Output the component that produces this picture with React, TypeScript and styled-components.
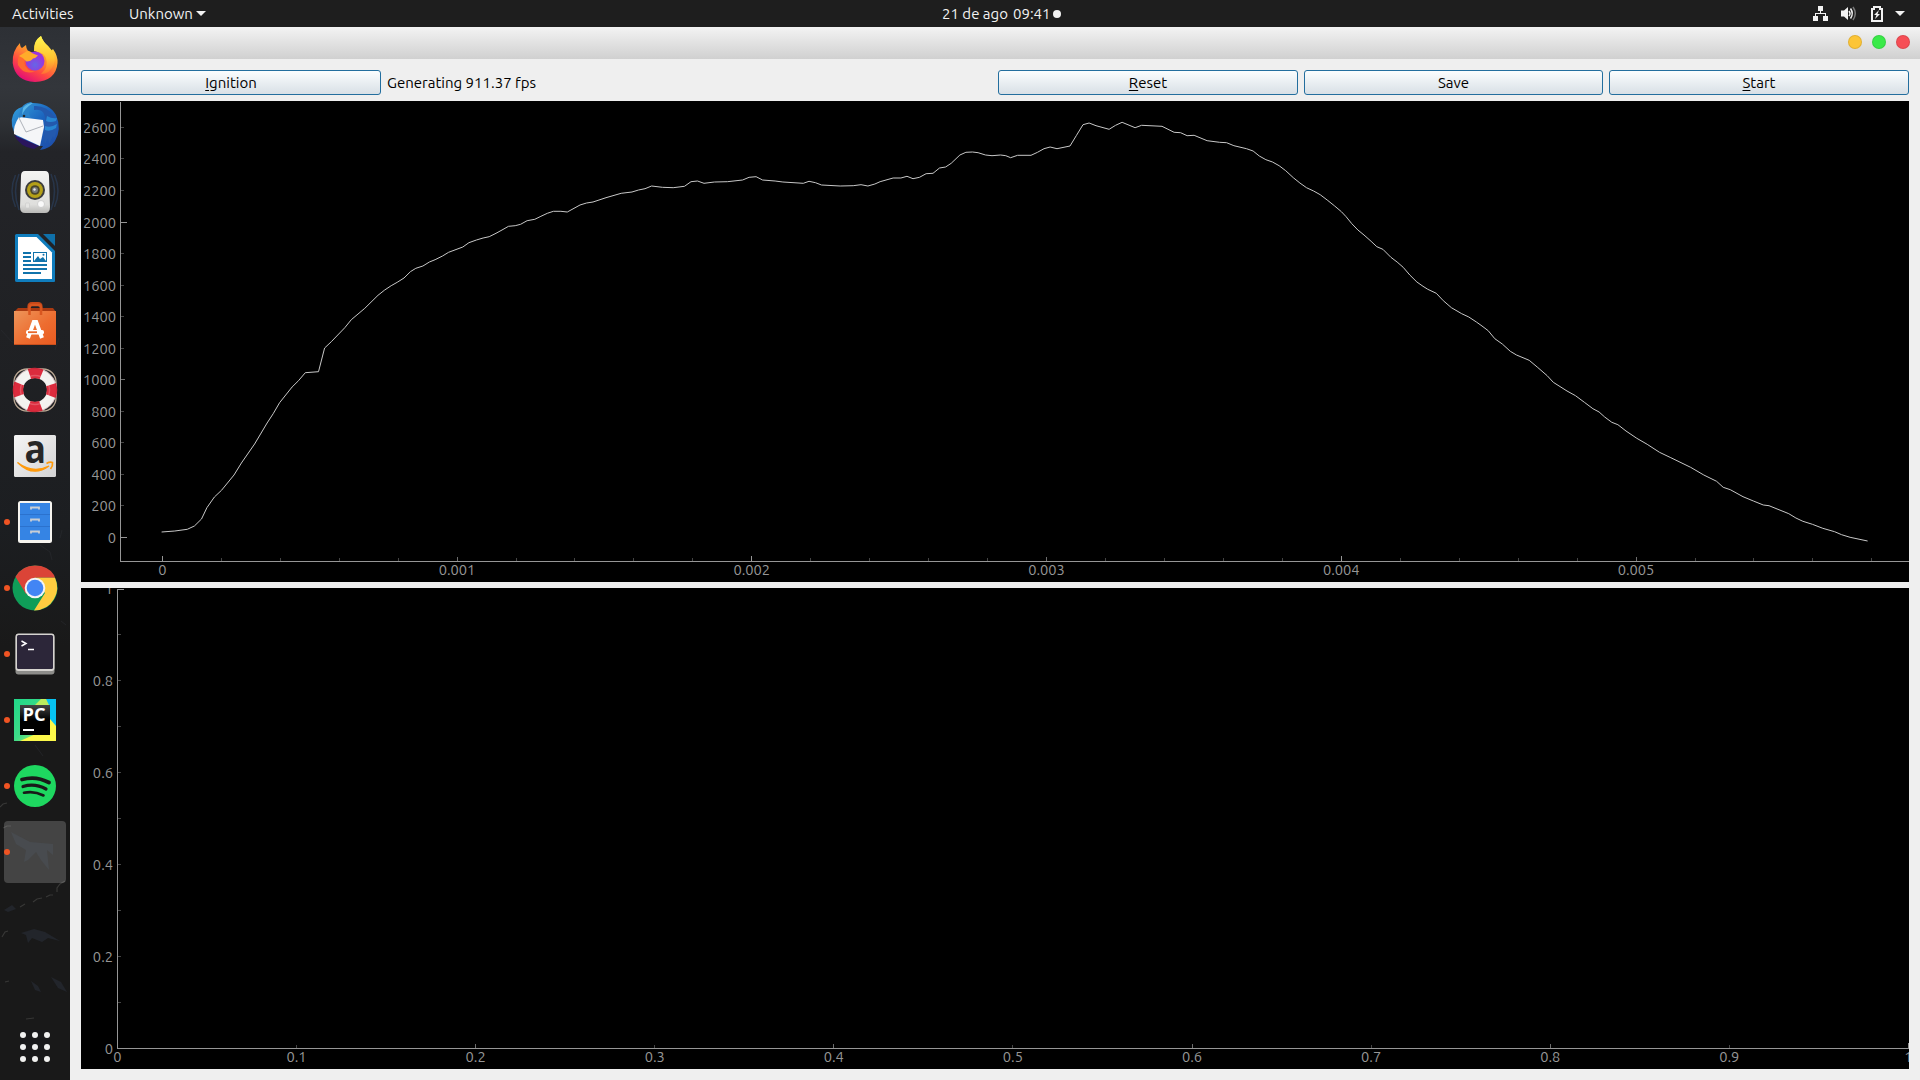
import React from "react";
import styled, { createGlobalStyle } from "styled-components";

const GlobalStyle = createGlobalStyle`
  html, body { margin: 0; padding: 0; }
  body { background: #1b1b1c; overflow: hidden; }
  * { box-sizing: border-box; }
`;

const fontStack = `Ubuntu, "Noto Sans", "Open Sans", sans-serif`;

const Desktop = styled.div`
  display: flex;
  flex-direction: column;
  width: 1920px;
  height: 1080px;
  font-family: ${fontStack};
  font-size: 15px;
  overflow: hidden;
`;

const TopBar = styled.header`
  display: grid;
  grid-template-columns: 942px auto 1fr;
  align-items: center;
  height: 27px;
  flex: none;
  background: #1e1e1e;
  color: #f2f2f2;
  line-height: 26px;
`;

const TopLeft = styled.div`
  display: flex;
  align-items: center;
  padding-left: 12px;
`;

const BarLabel = styled.span<{ $width: number }>`
  width: ${(p) => p.$width}px;
  white-space: nowrap;
`;

const Caret = styled.span`
  width: 0;
  height: 0;
  border: 5px solid transparent;
  border-top-color: #f2f2f2;
  border-bottom: 0;
`;

const Clock = styled.div`
  display: flex;
  align-items: center;
`;

const NoticeDot = styled.span`
  width: 8px;
  height: 8px;
  border-radius: 50%;
  background: #f2f2f2;
`;

const Tray = styled.div`
  display: flex;
  justify-content: flex-end;
  align-items: center;
  padding-right: 15px;
`;

const TrayIcon = styled.svg<{ $gap: number }>`
  display: block;
  margin-right: ${(p) => p.$gap}px;
`;

const Workspace = styled.div`
  display: flex;
  flex: 1;
  min-height: 0;
`;

const Dock = styled.nav`
  position: relative;
  display: flex;
  flex-direction: column;
  width: 70px;
  flex: none;
  background: linear-gradient(#2d3035 0, #33363b 60px, #2e3135 95px, #232428 125px, #202124 300px, #1c1e21 500px, #191919 620px, #191919 100%);
`;

const Wallpaper = styled.svg`
  position: absolute;
  inset: 0;
`;

const DockCell = styled.div<{ $bottom?: boolean }>`
  position: relative;
  width: 70px;
  height: 66px;
  flex: none;
  margin-top: ${(p) => (p.$bottom ? "auto" : "0")};
`;

const DockTile = styled.div`
  position: absolute;
  left: 4px;
  top: 2px;
  width: 62px;
  height: 62px;
  border-radius: 4px;
  background: rgba(255, 255, 255, 0.19);
`;

const RunningDot = styled.span`
  position: absolute;
  left: 4px;
  top: 30px;
  width: 6px;
  height: 6px;
  border-radius: 50%;
  background: #f05423;
`;

const DockSvg = styled.svg`
  position: relative;
  display: block;
`;

const Window = styled.main`
  display: flex;
  flex-direction: column;
  flex: 1;
  background: #efefef;
`;

const TitleBar = styled.div`
  display: flex;
  justify-content: flex-end;
  align-items: center;
  gap: 10px;
  height: 32px;
  padding: 0 10px 2px 0;
  background: linear-gradient(#f3f3f3, #d0d0d0);
`;

const WindowControl = styled.button<{ $color: string }>`
  width: 14px;
  height: 14px;
  padding: 0;
  border: 1px solid rgba(0, 0, 0, 0.1);
  border-radius: 50%;
  background: ${(p) => p.$color};
`;

const Body = styled.div`
  display: flex;
  flex-direction: column;
  gap: 6px;
  padding: 11px 11px 11px 11px;
`;

const Toolbar = styled.div`
  display: flex;
  gap: 6px;
  height: 25px;
`;

const PushButton = styled.button<{ $width?: number }>`
  width: ${(p) => p.$width ?? 300}px;
  flex: none;
  padding: 0;
  border: 1px solid #236e9e;
  border-radius: 3px;
  background: linear-gradient(#fbfdfe, #d8e0e6);
  color: #000;
  font-family: ${fontStack};
  font-size: 15px;
  line-height: 23px;
`;

const Mnemonic = styled.span`
  text-decoration: underline;
  text-underline-offset: 2px;
  text-decoration-thickness: 1px;
`;

const Status = styled.span`
  flex: 1;
  line-height: 25px;
  color: #000;
  white-space: nowrap;
`;

const Plot = styled.svg`
  display: block;
  width: 1828px;
  height: 481px;
  background: #000;
  font-family: ${fontStack};
  font-size: 14.67px;
  fill: #969696;
`;

const shades = { major: "#969696", medium: "#6c6c6c", minor: "#444444" };
type Level = keyof typeof shades;

interface Tick {
  at: number;
  label?: string;
  level: Level;
}

interface AxesProps {
  x0: number;
  y0: number;
  top: number;
  xTicks: Tick[];
  yTicks: Tick[];
}

const tickLength: Record<Level, number> = { major: 5, medium: 4, minor: 3 };

function Axes({ x0, y0, top, xTicks, yTicks }: AxesProps) {
  return (
    <g shapeRendering="crispEdges">
      {xTicks.map((t) => (
        <rect key={t.at} x={Math.floor(t.at)} y={y0 - tickLength[t.level]} width={1} height={tickLength[t.level]} fill={shades[t.level]} />
      ))}
      {yTicks.map((t) => (
        <rect key={t.at} x={x0 + 1} y={Math.max(top, Math.floor(t.at))} width={tickLength[t.level] + (t.level === "major" ? 1 : 0)} height={1} fill={shades[t.level]} />
      ))}
      <rect x={x0} y={top} width={1} height={y0 - top + 1} />
      <rect x={x0} y={y0} width={1909 - x0} height={1} />
      {xTicks.map((t) => t.label && (
        <text key={t.label} x={t.at} y={y0 + 14} textAnchor="middle">{t.label}</text>
      ))}
      {yTicks.map((t) => t.label && (
        <text key={t.label} x={x0 - 4} y={Math.floor(t.at) + 6} textAnchor="end">{t.label}</text>
      ))}
    </g>
  );
}

interface Segment {
  left: number;
  top: number;
  perX: number;
  points: string;
}

const thrust: Segment[] = [
  {
    left: 70, top: 90, perX: 2.958,
    points: "271,1326 310,1323 347,1318 368,1308 389,1287 405,1253 427,1221 448,1201 485,1155 507,1119 546,1062 583,999 601,971 620,938 657,891 676,872 696,848 735,845 753,774 773,755 813,713 832,689 872,655 911,616 931,600 950,587 968,577 988,564 1007,545 1023,535 1044,528 1063,516 1080,509 1102,498 1120,487 1162,471 1180,458 1202,450 1222,444 1240,440 1260,430 1278,420 1297,409 1317,407 1333,403 1352,392 1375,388 1393,379 1412,370 1430,364 1452,364 1471,366",
  },
  {
    left: 580, top: 100, perX: 2.306,
    points: "0,315 15,309 30,306 60,293 95,280 120,276 135,270 150,266 165,258 190,262 215,263 241,259 256,245 271,243 286,250 310,246 340,245 375,240 390,232 406,230 421,240 450,243 468,246 515,250 528,244 543,248 557,255 600,258 630,257 648,254 664,258 680,252 692,245 722,234 740,234 754,229 768,236 783,232 798,221 814,220 829,204 843,201 856,190 876,165 890,157 905,156 918,158 935,165 950,167 970,165 982,167 993,173 1009,166 1040,166 1055,157 1070,146 1084,141 1100,146 1130,138 1145,106 1160,74 1174,69 1190,77 1220,88 1235,76 1250,67 1280,83 1295,76 1342,79 1370,97 1385,98 1400,107 1416,106 1446,122 1475,127 1491,128 1508,137 1537,146",
  },
  {
    left: 1180, top: 100, perX: 2.119,
    points: "155,153 168,168 182,179 196,186 210,197 224,212 240,233 254,249 268,263 283,273 297,284 312,300 327,317 342,335 352,350 364,371 377,390 390,405 405,424 417,440 430,448 447,472 460,486 473,502 487,525 502,546 515,559 525,568 543,580 558,602 575,623 597,641 612,651 628,666 640,678 653,692 667,716 683,732 700,754 713,765 740,781 757,801 778,827 791,847 820,873 838,887 857,907 875,926 888,936 900,951 915,967 928,974 945,993 968,1015 990,1033 1016,1057 1040,1073 1082,1102 1110,1125 1137,1144 1151,1162 1166,1169 1193,1190 1215,1203 1236,1215 1248,1217 1290,1241 1305,1254 1320,1264 1340,1273 1362,1285 1387,1295 1402,1304 1420,1312 1457,1323",
  },
];

const curve = thrust
  .flatMap((s) =>
    s.points.split(" ").map((p) => {
      const [u, v] = p.split(",").map(Number);
      return `${(s.left + u / s.perX).toFixed(1)},${(s.top + v / 3).toFixed(1)}`;
    })
  )
  .join(" ");

const timeTicks: Tick[] = Array.from({ length: 30 }, (_, i) => {
  const at = 162.3 + i * 58.95;
  if (i % 5) return { at, level: "minor" };
  return { at, level: i % 10 ? "medium" : "major", label: i ? `0.00${i / 5}` : "0" };
});

const forceTicks: Tick[] = Array.from({ length: 14 }, (_, i) => ({
  at: 537.52 - i * 31.55,
  level: i % 10 === 0 ? "major" : i === 5 ? "medium" : "minor",
  label: String(i * 200),
}));

const unitX: Tick[] = Array.from({ length: 11 }, (_, i) => ({
  at: 117.4 + i * 179.1,
  level: i % 10 === 0 ? "major" : i % 2 ? "minor" : "medium",
  label: i % 10 === 0 ? String(i / 10) : `0.${i}`,
}));

const unitY: Tick[] = Array.from({ length: 11 }, (_, i) => ({
  at: 1048.4 - i * 45.95,
  level: i % 10 === 0 ? "major" : "minor",
  label: i % 2 ? undefined : i % 10 === 0 ? String(i / 10) : `0.${i}`,
}));

const Firefox = () => (
  <>
    <defs>
      <linearGradient id="ffBody" x1="0.8" y1="0.1" x2="0.3" y2="1">
        <stop offset="0" stopColor="#fff04a" /><stop offset="0.35" stopColor="#ffa02b" />
        <stop offset="0.68" stopColor="#ff4a42" /><stop offset="1" stopColor="#e10a79" />
      </linearGradient>
      <linearGradient id="ffTail" x1="0" y1="0" x2="0" y2="1">
        <stop offset="0" stopColor="#fff650" /><stop offset="0.6" stopColor="#ffc22f" /><stop offset="1" stopColor="#ff6f35" />
      </linearGradient>
      <radialGradient id="ffGlobe" cx="0.5" cy="0.7"><stop offset="0" stopColor="#6467e6" /><stop offset="1" stopColor="#9a35dc" /></radialGradient>
    </defs>
    <path d="M20 16 Q20 20 22 21 L26 18 Q26 21 28 24 L38 27 Q31 16 41 9 Q43 15 48 19 L51 24 L53 22 Q58 29 57.500 36 Q56 54 35 55 Q15 54 12.700 36 Q12 24 20 16 Z" fill="url(#ffBody)" />
    <path d="M34 24 Q33 14 41 9 Q43 15 49 20 Q57 28 54 37 Q50 47 41 47 Q49 40 46 31 Q44 26 38 25 Z" fill="url(#ffTail)" />
    <circle cx="35" cy="34" r="9.500" fill="url(#ffGlobe)" />
    <path d="M27 27 Q22 37 27 41 Q30 45 36 44 Q24 49 18 38 Q17 31 20 28 Z" fill="#ff6a30" />
    <path d="M19 29 Q24 26 28 23.500 Q31 26 38 28.500 Q36 31 33 31.500 Q31 34.500 26.500 34.500 Q24 31 19 29 Z" fill="#ffac2a" />
  </>
);

const Thunderbird = () => (
  <>
    <defs><linearGradient id="tb" x1="0" y1="0" x2="1" y2="1"><stop offset="0" stopColor="#35a5df" /><stop offset="0.5" stopColor="#1b62bd" /><stop offset="1" stopColor="#1f4ba5" /></linearGradient></defs>
    <path d="M22 14 Q27 8 33 10 Q49 10 56 22 Q62 36 55 48 Q50 56 40 57 L43 53 Q28 54 17 44 Q9 32 13 22 Q15 16 22 14Z" fill="url(#tb)" />
    <path d="M14 42 L39 53 L34 56 Q20 54 14 42Z" fill="#2a155e" />
    <path d="M19 24 L43 27 L44 34 L40 53 L14 41 Q13 33 19 24Z" fill="#f5f6f8" />
    <path d="M19 25 L26 39 L43 33" fill="none" stroke="#9aa0a8" strokeWidth="0.8" />
    <path d="M19 25 Q19 13 31 9 L34 12 Q26 18 31 25 L24 23Z" fill="#2b83c9" />
    <path d="M23 15 Q27 10 33 10 Q25 15 22 22Z" fill="#5bb8e8" />
    <path d="M34 17 Q46 15 45 29 Q43 41 45 51 L48 45 L49 51 L53 43 L54 46 Q60 34 54 23 Q46 12 34 13Z" fill="#2359ad" />
    <path d="M47 23 Q52 26 57 25 L56 28 Q50 30 46 28Z M45 33 Q51 35 57 31 L56 35 Q50 39 45 37Z" fill="#2786d2" />
    <circle cx="24" cy="23" r="1.300" fill="#25282c" />
  </>
);

const Speaker = () => (
  <>
    <g fill="none" stroke="#2b3f5c" strokeWidth="1.500" opacity="0.65">
      <path d="M19 15 Q12 32 19 51 M15.500 16 Q8.500 32 15.500 48 M51 15 Q58 32 51 51 M54.500 16 Q61.500 32 54.500 48" />
    </g>
    <defs><linearGradient id="spk" x1="0" y1="0" x2="0" y2="1"><stop offset="0" stopColor="#f4f4f2" /><stop offset="0.8" stopColor="#dededc" /><stop offset="1" stopColor="#b8b8b6" /></linearGradient></defs>
    <path d="M25 12 H45 Q49 12 49 17 L50 48 Q50 54 45 54 H25 Q20 54 20 48 L21 17 Q21 12 25 12Z" fill="url(#spk)" />
    <circle cx="35" cy="31" r="10" fill="#3b3c3c" /><circle cx="35" cy="31" r="8" fill="#b4a018" />
    <circle cx="35" cy="31" r="4.800" fill="#49452b" /><circle cx="35" cy="31" r="3" fill="#777a7b" /><circle cx="34.500" cy="30.500" r="1.200" fill="#e8e8e8" />
    <circle cx="41" cy="45" r="3.500" fill="#fafafa" stroke="#c4c4c4" strokeWidth="0.700" />
    <rect x="25.500" y="44" width="4" height="5" rx="1" fill="#e4e4e2" stroke="#c9c9c9" strokeWidth="0.600" />
  </>
);

const Writer = () => (
  <>
    <path d="M16.500 9 H38 L55 26 V56 Q55 57 54 57 H17 Q15 57 15 55.500 V10.500 Q15 9 16.500 9Z" fill="#107dbd" />
    <path d="M18 12 H36.500 L52 27.500 V54 H18Z" fill="#fff" />
    <path d="M43 9 H55 V21Z" fill="#0f70a9" />
    <path d="M23 28 H31 M23 32 H31 M23 36 H31 M23 40 H47 M23 44 H47 M23 48 H41" stroke="#1173ab" strokeWidth="2" />
    <rect x="33.500" y="27.500" width="13" height="9" fill="#fff" stroke="#1173ab" />
    <path d="M34 36 L38 31 L40 34 L43 32 L46 36Z" fill="#1173ab" /><circle cx="43.500" cy="29.800" r="1" fill="#1173ab" />
  </>
);

const Software = () => (
  <>
    <defs><linearGradient id="bag" x1="0" y1="0" x2="1" y2="1"><stop offset="0" stopColor="#ed955a" /><stop offset="0.55" stopColor="#ed6d30" /><stop offset="1" stopColor="#e95a20" /></linearGradient></defs>
    <path d="M18 17 H53 L56 21 H14Z" fill="#a93a12" />
    <path d="M28.500 20 V15.500 Q28.500 12 32 12 H38 Q41.500 12 41.500 15.500 V20" fill="none" stroke="#c64819" strokeWidth="2.200" />
    <rect x="14" y="20" width="42" height="34" fill="url(#bag)" />
    <path d="M29.500 24 V17 Q29.500 14 32 14 H38 Q41 14 41 17 V24" fill="none" stroke="#d9561f" strokeWidth="2.500" />
    <path d="M28 47 L33.800 31 H36.200 L42 47" fill="none" stroke="#fff" strokeWidth="4" />
    <rect x="26" y="39" width="18" height="4.500" rx="2" fill="#fff" /><path d="M28 41.200 H37" stroke="#e8662a" strokeWidth="1.800" />
    <rect x="14" y="53" width="42" height="1" fill="#c94f1d" />
  </>
);

const Lifebuoy = () => (
  <>
    <rect x="14" y="12" width="42" height="42" rx="13" fill="none" stroke="#bba894" strokeWidth="1.300" />
    <circle cx="35" cy="33" r="17" fill="none" stroke="#f3f2ef" strokeWidth="10" />
    <circle cx="35" cy="33" r="17" fill="none" stroke="#dc2b3d" strokeWidth="10.500" strokeDasharray="12.400 14.304" strokeDashoffset="6.200" />
    <circle cx="35" cy="33" r="14.500" fill="none" stroke="#fff" strokeWidth="1.500" opacity="0.2" />
    <circle cx="35" cy="33" r="21.500" fill="none" stroke="#7d2229" strokeWidth="0.800" opacity="0.3" />
  </>
);

const Amazon = () => (
  <>
    <defs><linearGradient id="amz" x1="0" y1="0" x2="1" y2="1"><stop offset="0" stopColor="#f5f5f5" /><stop offset="1" stopColor="#d3d3d4" /></linearGradient></defs>
    <rect x="14" y="12" width="42" height="42" rx="1.500" fill="url(#amz)" />
    <text x="24.500" y="40" textLength="21.500" lengthAdjust="spacingAndGlyphs" fontFamily='"Open Sans", sans-serif' fontWeight="700" fontSize="40" fill="#272727">a</text>
    <path d="M17.500 39.500 Q33 51 49 43 Q33 55 17.500 39.500Z" fill="#ff9a0c" stroke="#ff9a0c" strokeWidth="1.200" />
    <path d="M46.500 40.500 Q50 38.500 52.500 39.500 Q53 43 50.500 46" fill="none" stroke="#ff9a0c" strokeWidth="1.700" />
  </>
);

const Files = () => (
  <>
    <rect x="18" y="12" width="34" height="42" rx="2.500" fill="#f6f4ef" />
    <rect x="20" y="14" width="30" height="37" fill="#3584e4" />
    <path d="M20 25.500 H50 M20 37.500 H50" stroke="#2b72ce" />
    <path d="M31 20.500 V18.500 H39 V20.500 M31 32.500 V30.500 H39 V32.500 M31 44.500 V42.500 H39 V44.500" fill="none" stroke="#c9ced4" strokeWidth="1.800" />
  </>
);

const Chrome = () => (
  <>
    <circle cx="35" cy="33" r="22.500" fill="#0f9d58" />
    <path d="M35 22.800 H55 L54 20 Q48 10.500 35 10.500 Q22 10.500 15.500 21.700 L26 39Z" fill="#db4437" />
    <path d="M35 22.800 H55 Q60 34 54 44 Q48 55 34 55.500 L45 38Z" fill="#ffcd40" />
    <circle cx="35" cy="33" r="10.300" fill="#f4f4f4" /><circle cx="35" cy="33" r="8.300" fill="#4285f4" />
  </>
);

const Terminal = () => (
  <>
    <rect x="15.500" y="14" width="39" height="39.500" rx="3" fill="#8d8d8a" />
    <rect x="15.500" y="12.500" width="39" height="37.500" rx="3" fill="#d6d4d0" />
    <rect x="17" y="14" width="36" height="34" rx="1.500" fill="#2c2639" />
    <path d="M21.500 20 L26 22.500 L21.500 25" fill="none" stroke="#fff" strokeWidth="1.500" /><path d="M28 28.500 H34" stroke="#fff" strokeWidth="1.500" />
  </>
);

const PyCharm = () => (
  <>
    <defs>
      <linearGradient id="pyc" x1="0" y1="0" x2="1" y2="1"><stop offset="0" stopColor="#21d789" /><stop offset="0.5" stopColor="#3edc88" /><stop offset="1" stopColor="#fcf84a" /></linearGradient>
      <linearGradient id="pyk" x1="0" y1="0" x2="0" y2="1"><stop offset="0" stopColor="#444" /><stop offset="0.5" stopColor="#000" /></linearGradient>
    </defs>
    <rect x="14" y="12" width="42" height="42" fill="url(#pyc)" />
    <path d="M41 12 H46 L56 38 V54 H20 L38 46Z" fill="#fcf84a" /><path d="M46 12 H56 V39 L50 32Z" fill="#07c3f2" />
    <path d="M41 12 H46 L49 18 H35Z" fill="#bdec5d" />
    <rect x="20" y="18" width="30" height="30" fill="url(#pyk)" />
    <text x="22.500" y="34" fontFamily='"Open Sans", sans-serif' fontWeight="700" fontSize="17" textLength="23" lengthAdjust="spacingAndGlyphs" fill="#fff">PC</text>
    <rect x="23" y="42" width="11" height="2" fill="#fff" />
  </>
);

const Spotify = () => (
  <>
    <circle cx="35" cy="33" r="21" fill="#1ed760" />
    <g fill="none" stroke="#191919" strokeLinecap="round">
      <path d="M22 26.500 Q36 22.500 49 29.500" strokeWidth="3.800" /><path d="M23 33.500 Q35 30 46 36" strokeWidth="3.200" /><path d="M24 39.800 Q34 37.500 43.500 42.500" strokeWidth="2.600" />
    </g>
  </>
);

const dockItems: { name: string; icon: React.FC; running?: boolean }[] = [
  { name: "firefox", icon: Firefox },
  { name: "thunderbird", icon: Thunderbird },
  { name: "rhythmbox", icon: Speaker },
  { name: "writer", icon: Writer },
  { name: "software", icon: Software },
  { name: "help", icon: Lifebuoy },
  { name: "amazon", icon: Amazon },
  { name: "files", icon: Files, running: true },
  { name: "chrome", icon: Chrome, running: true },
  { name: "terminal", icon: Terminal, running: true },
  { name: "pycharm", icon: PyCharm, running: true },
  { name: "spotify", icon: Spotify, running: true },
];

export default function App() {
  return (
    <Desktop>
      <GlobalStyle />
      <TopBar>
        <TopLeft>
          <BarLabel $width={117}>Activities</BarLabel>
          <BarLabel $width={67}>Unknown</BarLabel>
          <Caret />
        </TopLeft>
        <Clock>
          <BarLabel $width={71}>21 de ago</BarLabel>
          <BarLabel $width={40}>09:41</BarLabel>
          <NoticeDot />
        </Clock>
        <Tray>
          <TrayIcon $gap={13} width="15" height="15" viewBox="0 0 15 15" fill="#f2f2f2">
            <path d="M5 0H10V5H8V7H13V10H15V15H10V10H12V8H3V10H5V15H0V10H2V7H7V5H5Z" />
          </TrayIcon>
          <TrayIcon $gap={15} width="15" height="15" viewBox="0 0 15 15" fill="#f2f2f2">
            <path d="M0 4.500H3L7 1V14L3 10.500H0Z" />
            <path d="M8 5Q10 7.500 8 10" fill="none" stroke="#f2f2f2" strokeWidth="1.500" />
            <path d="M9.500 2.500Q13 7.500 9.500 12.500" fill="none" stroke="#f2f2f2" strokeWidth="1.500" />
            <path d="M12 1Q16.500 7.500 12 14" fill="none" stroke="#777" strokeWidth="1.500" />
          </TrayIcon>
          <TrayIcon $gap={12} width="12" height="16" viewBox="0 0 12 16">
            <path d="M1 3H3V1H9V3H11V15H1Z" fill="none" stroke="#f2f2f2" strokeWidth="2" />
            <path d="M8 4L3 9H5.500L4 13L9 8H6.500Z" fill="#f2f2f2" />
          </TrayIcon>
          <Caret />
        </Tray>
      </TopBar>
      <Workspace>
        <Dock>
          <Wallpaper width="70" height="1053" viewBox="0 27 70 1053" fill="none">
            <g stroke="#4b4b49" strokeWidth="1.200" opacity="0.6">
              <path d="M0 807L3 804L7 803M3 828L7 826L11 826M20 907L25 904M33 902L37 899L42 898M46 897L50 895L53 895M57 892L57 888L60 884L65 881M2 937L5 932L8 931M5 982L9 981M26 1019L34 1018" />
            </g>
            <g fill="#22252b"><path d="M21 933L34 929L45 932L60 941L48 938L42 942L32 938L28 943L26 935Z" /><path d="M31 981L38 986L41 992L35 990Z" /><path d="M51 977L61 982L67 992L58 988Z" /><path d="M4 910L12 905L16 909L8 912Z" /></g>
            <g stroke="#292c31" opacity="0.6"><path d="M1 330L12 342L19 343M55 350L59 338M40 545L50 552L52 560M60 538L62 530M35 745L43 756M61 621L66 625" /></g>
            <path d="M11 832L30 842L53 844L53 855L47 850L49 870L41 860L36 852L28 860L24 862L26 850L16 844Z" fill="#1e2227" />
          </Wallpaper>
          {dockItems.map(({ name, icon: Icon, running }) => (
            <DockCell key={name}>
              {running && <RunningDot />}
              <DockSvg width="70" height="66" viewBox="0 0 70 66"><Icon /></DockSvg>
            </DockCell>
          ))}
          <DockCell>
            <DockTile />
            <RunningDot />
          </DockCell>
          <DockCell $bottom>
            <DockSvg width="70" height="66" viewBox="0 0 70 66" fill="#f2f2f0">
              {[21, 33, 45].flatMap((y) => [23, 35, 47].map((x) => <circle key={`${x}-${y}`} cx={x} cy={y} r="3" />))}
            </DockSvg>
          </DockCell>
        </Dock>
        <Window>
          <TitleBar>
            <WindowControl $color="#fcc537" />
            <WindowControl $color="#3aea49" />
            <WindowControl $color="#f64e56" />
          </TitleBar>
          <Body>
            <Toolbar>
              <PushButton><Mnemonic>I</Mnemonic>gnition</PushButton>
              <Status>Generating 911.37 fps</Status>
              <PushButton><Mnemonic>R</Mnemonic>eset</PushButton>
              <PushButton $width={299}>Save</PushButton>
              <PushButton><Mnemonic>S</Mnemonic>tart</PushButton>
            </Toolbar>
            <Plot viewBox="81 101 1828 481">
              <Axes x0={120} y0={561} top={102} xTicks={timeTicks} yTicks={forceTicks} />
              <polyline points={curve} fill="none" stroke="#c8c8c8" strokeWidth="1" />
            </Plot>
            <Plot viewBox="81 588 1828 481">
              <Axes x0={117} y0={1048} top={589} xTicks={unitX} yTicks={unitY} />
            </Plot>
          </Body>
        </Window>
      </Workspace>
    </Desktop>
  );
}
